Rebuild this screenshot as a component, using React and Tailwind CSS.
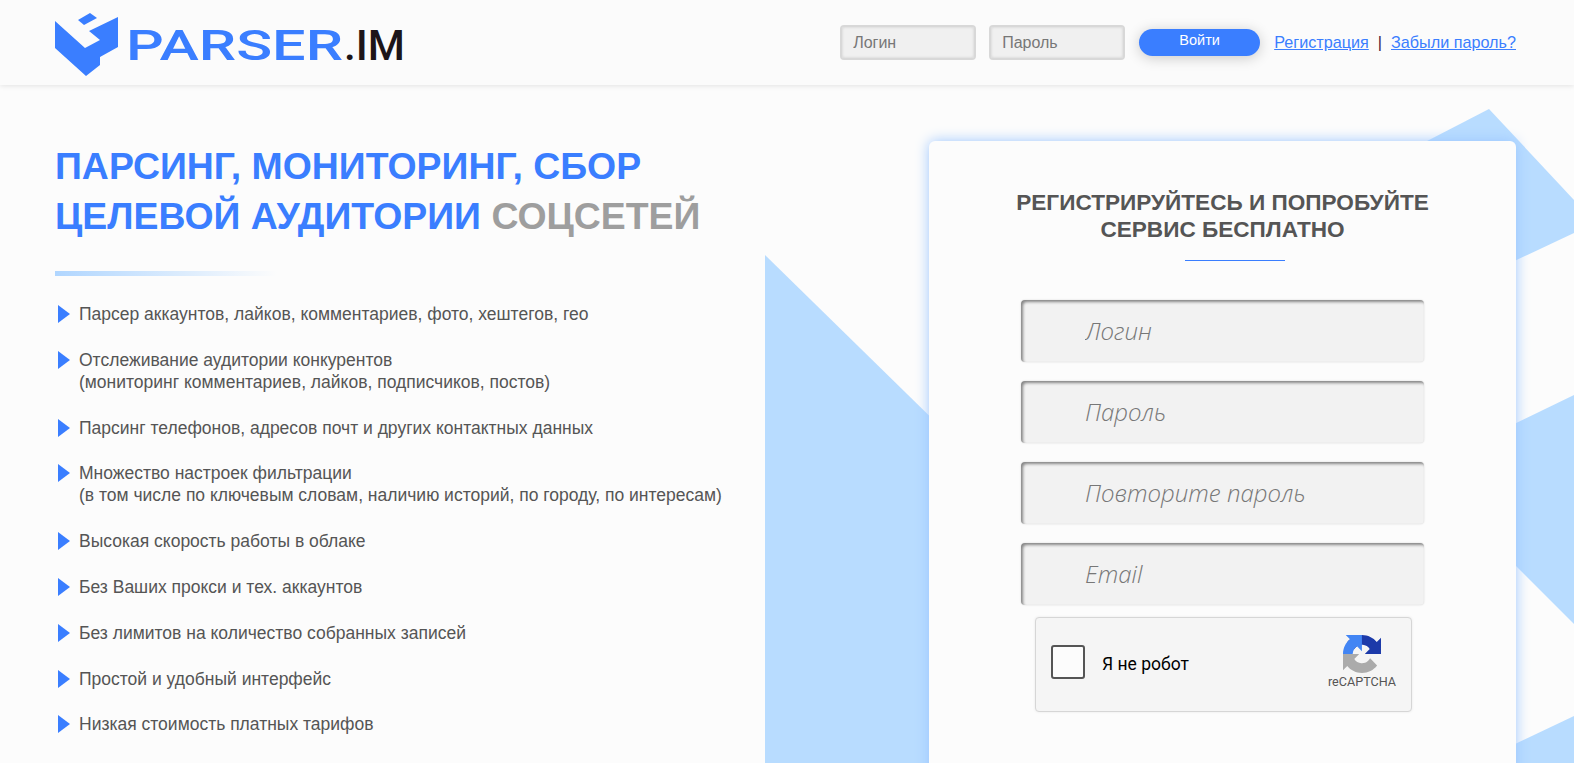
const features = [
  ["Парсер аккаунтов, лайков, комментариев, фото, хештегов, гео"],
  ["Отслеживание аудитории конкурентов", "(мониторинг комментариев, лайков, подписчиков, постов)"],
  ["Парсинг телефонов, адресов почт и других контактных данных"],
  ["Множество настроек фильтрации", "(в том числе по ключевым словам, наличию историй, по городу, по интересам)"],
  ["Высокая скорость работы в облаке"],
  ["Без Ваших прокси и тех. аккаунтов"],
  ["Без лимитов на количество собранных записей"],
  ["Простой и удобный интерфейс"],
  ["Низкая стоимость платных тарифов"],
]

function Logo() {
  return (
    <svg width="360" height="72" viewBox="0 0 360 72" className="shrink-0">
      <path d="M1 14 L31 41 L46 33 L35 24 L64 10 L64 40 L46 50 L46 58 L32 69 L1 41 Z" fill="#3a7eff" />
      <path d="M24 13 L36 6 L43 11 L30 18 Z" fill="#3a7eff" />
      <text x="72" y="53" fontFamily="Roboto, sans-serif" fontWeight="500" fontSize="43" fill="#3a7eff" textLength="217" lengthAdjust="spacingAndGlyphs">PARSER</text>
      <text x="290" y="53" fontFamily="Roboto, sans-serif" fontWeight="500" fontSize="43" fill="#1d1518" textLength="61" lengthAdjust="spacingAndGlyphs">.IM</text>
    </svg>
  )
}

function RecaptchaIcon() {
  return (
    <svg width="38" height="38" viewBox="0 0 64 64">
      <path d="M64 31.955l-.033-1.37V4.687l-7.16 7.16C50.948 4.674 42.033.093 32.05.093c-10.4 0-19.622 4.96-25.458 12.64l11.736 11.86a15.55 15.55 0 0 1 4.754-5.334c2.05-1.6 4.952-2.906 8.968-2.906.485 0 .86.057 1.135.163 4.976.393 9.288 3.14 11.828 7.124l-8.307 8.307 26.3.008" fill="#1c3aa9" />
      <path d="M31.862 0l-1.37.033H4.594l7.16 7.16C4.58 13.052 0 21.967 0 31.95c0 1.4.1 2.8.3 4l16-4c0-.485.057-.86.163-1.135.393-4.976 3.14-9.288 7.124-11.828l8.307 8.307L31.862 0" fill="#4285f4" />
      <path d="M.001 31.955l.033 1.37v25.898l7.16-7.16c5.86 7.173 14.774 11.754 24.76 11.754 10.4 0 19.622-4.96 25.458-12.64l-11.736-11.86a15.55 15.55 0 0 1-4.754 5.334c-2.05 1.6-4.952 2.906-8.968 2.906-.485 0-.86-.057-1.135-.163-4.976-.393-9.288-3.14-11.828-7.124l8.307-8.307-26.3-.008" fill="#ababab" />
    </svg>
  )
}

function HeaderInput({ placeholder }) {
  return (
    <input
      placeholder={placeholder}
      className="h-[35px] w-[136px] rounded-[4px] border-2 border-[#d8d8d8] bg-[#f0f0f0] pl-[11px] text-[16px] shadow-[inset_0_0_3px_rgba(0,0,0,0.15)] outline-none placeholder:text-[#777]"
    />
  )
}

function FormInput({ placeholder }) {
  return (
    <input
      placeholder={placeholder}
      className="h-[62px] w-full rounded-[4px] bg-[#f2f2f2] pb-[2px] pl-[64px] font-['Open_Sans',sans-serif] text-[24px] font-light italic shadow-[inset_2px_2px_3px_rgba(0,0,0,0.45),0_0_2px_rgba(0,0,0,0.15)] outline-none placeholder:text-[#777]"
    />
  )
}

export default function App() {
  return (
    <div className="relative h-screen overflow-hidden bg-[#fcfcfc] font-['Liberation_Sans',Arial,sans-serif]">
      {/* background shapes */}
      <svg className="absolute inset-0" width="1574" height="763" viewBox="0 0 1574 763">
        <path d="M765 255 L1000 485 L1000 763 L765 763 Z" fill="#b8dcff" />
        <path d="M1489 109 L1574 200 L1574 233 L1400 315 L1400 155 Z" fill="#b8dcff" />
        <path d="M1574 395 L1450 455 L1450 500 L1574 624 Z" fill="#b8dcff" />
        <path d="M1574 716 L1450 775 L1574 775 Z" fill="#b8dcff" />
      </svg>

      <header className="relative flex h-[85px] items-center justify-between bg-[#fbfbfb] pl-[54px] pr-[58px] shadow-[0_1px_5px_rgba(0,0,0,0.1)]">
        <Logo />
        <div className="flex items-center text-[16.2px]">
          <div className="flex gap-[13px]">
            <HeaderInput placeholder="Логин" />
            <HeaderInput placeholder="Пароль" />
          </div>
          <button className="ml-[14px] h-[27px] w-[121px] rounded-[14px] bg-[#3a7eff] pb-[3px] text-[14.5px] text-white shadow-[0_2px_14px_rgba(0,0,0,0.2)]">
            Войти
          </button>
          <a className="ml-[14px] text-[#3a7eff] underline">Регистрация</a>
          <span className="mx-[9px] text-[#3a1a3a]">|</span>
          <a className="text-[#3a7eff] underline">Забыли пароль?</a>
        </div>
      </header>

      <main className="relative flex justify-between pl-[55px] pr-[58px]">
        <section>
          <h1 className="mt-[56px] text-[37.4px] font-bold leading-[50px] text-[#3a7eff]">
            ПАРСИНГ, МОНИТОРИНГ, СБОР
            <br />
            ЦЕЛЕВОЙ АУДИТОРИИ <span className="text-[#9e9e9e]">СОЦСЕТЕЙ</span>
          </h1>
          <div className="mt-[30px] h-[5px] w-[222px] bg-gradient-to-r from-[#b0d6ff] to-transparent" />
          <ul className="mt-[27px] flex flex-col gap-[23.8px]">
            {features.map((lines) => (
              <li key={lines[0]} className="flex text-[17.5px] leading-[22px] text-[#555]">
                <svg width="12" height="18" viewBox="0 0 12 18" className="ml-[3px] mt-[2px] shrink-0">
                  <path d="M0 0 L12 9 L0 18 Z" fill="#3a7eff" />
                </svg>
                <div className="ml-[9px]">
                  {lines.map((line) => (
                    <div key={line}>{line}</div>
                  ))}
                </div>
              </li>
            ))}
          </ul>
        </section>

        <section className="mt-[56px] h-[700px] w-[587px] shrink-0 rounded-[6px] bg-[#fcfcfc] shadow-[0_0_14px_#9cc6ff]">
          <h2 className="mt-[48px] text-center text-[22.6px] font-bold leading-[27px] text-[#555]">
            РЕГИСТРИРУЙТЕСЬ И ПОПРОБУЙТЕ
            <br />
            СЕРВИС БЕСПЛАТНО
          </h2>
          <div className="ml-[256px] mt-[17px] h-px w-[100px] bg-[#3a7eff]" />
          <form className="mx-[92px] mt-[39px] flex flex-col gap-[19px]">
            <FormInput placeholder="Логин" />
            <FormInput placeholder="Пароль" />
            <FormInput placeholder="Повторите пароль" />
            <FormInput placeholder="Email" />
          </form>
          <div className="ml-[106px] mt-[12px] flex h-[95px] w-[377px] items-center rounded-[4px] border border-[#d6d6d6] bg-[#f5f5f5] pl-[15px] pr-[15px] shadow-[0_0_3px_rgba(0,0,0,0.08)]">
            <div className="mb-[6px] h-[34px] w-[34px] rounded-[3px] border-[2.5px] border-[#555] bg-[#fcfcfc]" />
            <span className="ml-[17px] font-['Roboto',sans-serif] text-[17.5px] text-black">Я не робот</span>
            <div className="ml-auto flex flex-col items-center pb-[6px]">
              <RecaptchaIcon />
              <span className="mt-[2px] font-['Roboto',sans-serif] text-[12.6px] leading-[14px] text-[#555]">reCAPTCHA</span>
            </div>
          </div>
        </section>
      </main>
    </div>
  )
}
